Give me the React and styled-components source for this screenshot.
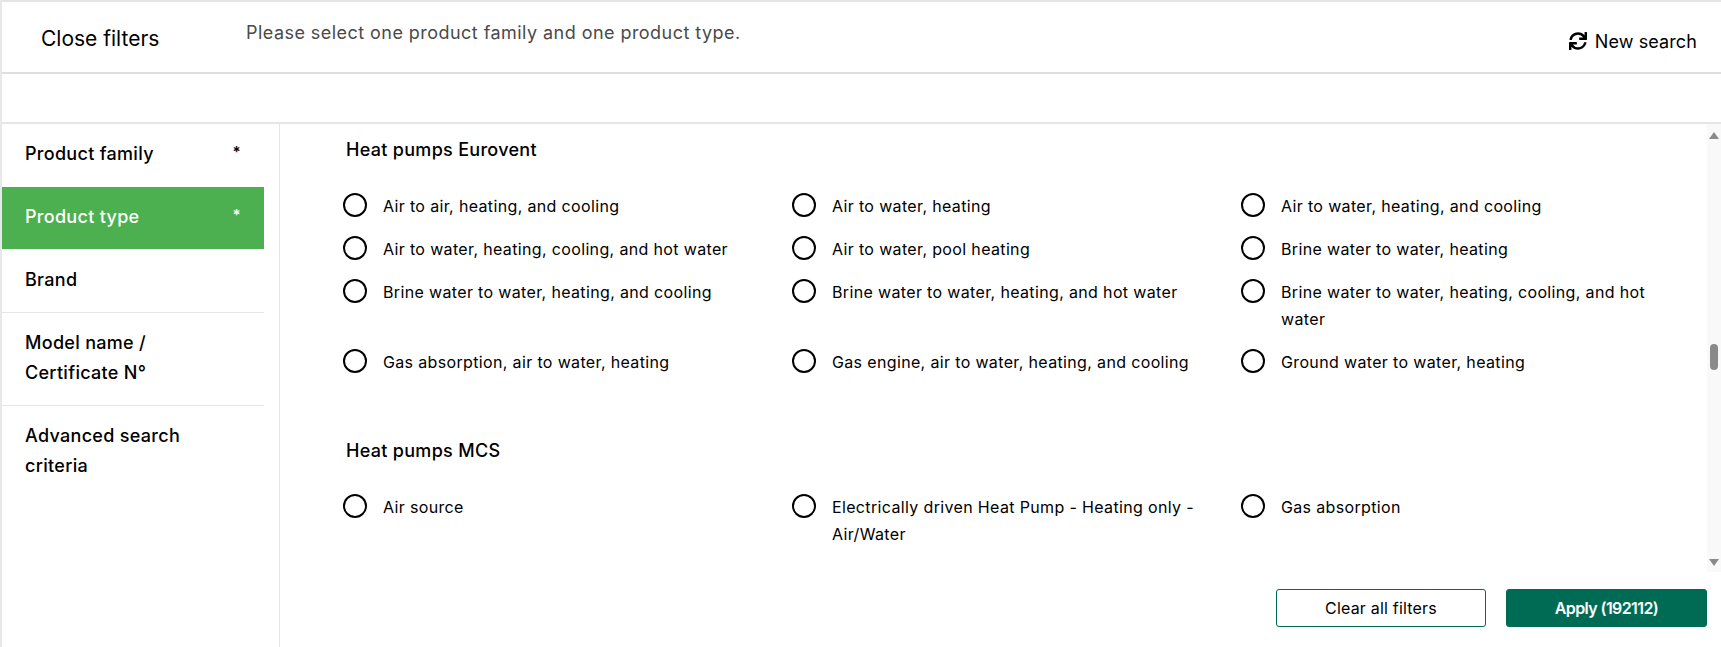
import styled, { createGlobalStyle } from "styled-components";
import { FaSync } from "react-icons/fa";

const GlobalStyle = createGlobalStyle`
  body {
    margin: 0;
    background: #fff;
    color: #000;
    font-family: "Inter", "Open Sans", sans-serif;
    overflow: hidden;
  }
`;

const Page = styled.div`
  width: 1721px;
  height: 647px;
  display: flex;
  flex-direction: column;
  border-left: 2px solid #e8e8ea;
  box-sizing: border-box;
`;

const Header = styled.header`
  height: 74px;
  flex: none;
  box-sizing: border-box;
  display: flex;
  align-items: center;
  border-top: 2px solid #e4e4e6;
  border-bottom: 2px solid #dedee0;
`;

const CloseButton = styled.div`
  width: 244px;
  padding: 2px 0 0 39px;
  box-sizing: border-box;
  font-size: 21px;
`;

const Message = styled.div`
  align-self: flex-start;
  margin-top: 18px;
  font-size: 18px;
  letter-spacing: 0.45px;
  line-height: 26px;
  color: #4a4a4a;
  flex: 1;
`;

const NewSearch = styled.div`
  display: flex;
  align-items: center;
  gap: 8px;
  margin: 8px 24px 0 0;
  font-size: 18px;
  letter-spacing: 0.1px;

  svg {
    width: 18px;
    height: 18px;
  }
`;

const Spacer = styled.div`
  height: 48px;
  flex: none;
  border-bottom: 2px solid #e6e6e8;
`;

const Main = styled.div`
  flex: 1;
  display: flex;
  min-height: 0;
`;

const Sidebar = styled.nav`
  width: 278px;
  flex: none;
  box-sizing: border-box;
  padding-right: 15px;
  border-right: 1px solid #e4e4e6;
`;

const SideItem = styled.div`
  display: flex;
  justify-content: space-between;
  padding: 15px 23px 17px 23px;
  font-size: 18px;
  font-weight: 500;
  letter-spacing: 0.3px;
  line-height: 30px;
  margin-bottom: 1px;
  background: ${(p) => (p.$active ? "#4caf50" : "transparent")};
  color: ${(p) => (p.$active ? "#fff" : "#000")};
  box-shadow: ${(p) => (p.$ruled ? "0 1px 0 #e6e6e8" : "none")};
`;

const Star = styled.span`
  font-size: 15px;
  font-weight: 600;
  line-height: 26px;
`;

const Content = styled.div`
  flex: 1;
  min-width: 0;
  display: flex;
  flex-direction: column;
`;

const Panel = styled.div`
  flex: none;
  height: 448px;
  display: flex;
`;

const Scroller = styled.div`
  flex: 1;
  padding: 12px 0 0 63px;
`;

const Group = styled.section`
  margin-bottom: 45px;
`;

const GroupTitle = styled.h3`
  margin: 0 0 30px 3px;
  font-size: 18px;
  font-weight: 500;
  letter-spacing: 0.3px;
  line-height: 27px;
`;

const Options = styled.div`
  display: grid;
  grid-template-columns: repeat(3, 449px);
`;

const Option = styled.label`
  display: flex;
  align-items: flex-start;
  gap: 16px;
  margin-bottom: 16px;
  padding-right: 30px;
  font-size: 16px;
  letter-spacing: 0.35px;
  line-height: 27px;
`;

const Radio = styled.span`
  width: 24px;
  height: 24px;
  flex: none;
  box-sizing: border-box;
  border: 2px solid #000;
  border-radius: 50%;
`;

const Scrollbar = styled.div`
  width: 14px;
  flex: none;
  display: flex;
  flex-direction: column;
  align-items: center;
  background: #f9f9f9;
  padding: 8px 0 6px;
  box-sizing: border-box;
`;

const Arrow = styled.span`
  width: 0;
  height: 0;
  border-left: 5px solid transparent;
  border-right: 5px solid transparent;
  ${(p) =>
    p.$down
      ? "border-top: 7px solid #8a8a8a; margin-top: auto;"
      : "border-bottom: 7px solid #8a8a8a;"}
`;

const Thumb = styled.span`
  width: 8px;
  height: 26px;
  margin-top: 205px;
  border-radius: 4px;
  background: #8a8a8a;
`;

const Footer = styled.footer`
  display: flex;
  justify-content: flex-end;
  gap: 20px;
  padding: 17px 14px 0 0;
`;

const ActionButton = styled.button`
  width: ${(p) => (p.$primary ? "201px" : "210px")};
  height: 38px;
  box-sizing: border-box;
  border: 1px solid #006b54;
  border-radius: 3px;
  background: ${(p) => (p.$primary ? "#006b54" : "#fff")};
  color: ${(p) => (p.$primary ? "#fff" : "#000")};
  font-family: inherit;
  font-size: 16px;
  font-weight: ${(p) => (p.$primary ? 600 : 400)};
  letter-spacing: ${(p) => (p.$primary ? "-0.6px" : "0.2px")};
  padding: 0;
`;

const sideItems = [
  { label: "Product family", star: true, ruled: false },
  { label: "Product type", star: true, active: true },
  { label: "Brand", ruled: true },
  { label: <>Model name /<br />Certificate N°</>, ruled: true },
  { label: <>Advanced search<br />criteria</> },
];

const groups = [
  {
    title: "Heat pumps Eurovent",
    options: [
      "Air to air, heating, and cooling",
      "Air to water, heating",
      "Air to water, heating, and cooling",
      "Air to water, heating, cooling, and hot water",
      "Air to water, pool heating",
      "Brine water to water, heating",
      "Brine water to water, heating, and cooling",
      "Brine water to water, heating, and hot water",
      "Brine water to water, heating, cooling, and hot water",
      "Gas absorption, air to water, heating",
      "Gas engine, air to water, heating, and cooling",
      "Ground water to water, heating",
    ],
  },
  {
    title: "Heat pumps MCS",
    options: [
      "Air source",
      "Electrically driven Heat Pump - Heating only - Air/Water",
      "Gas absorption",
    ],
  },
];

const App = () => {
  return (
    <Page>
      <GlobalStyle />
      <Header>
        <CloseButton>Close filters</CloseButton>
        <Message>Please select one product family and one product type.</Message>
        <NewSearch>
          <FaSync />
          New search
        </NewSearch>
      </Header>
      <Spacer />
      <Main>
        <Sidebar>
          {sideItems.map((item, i) => (
            <SideItem key={i} $active={item.active} $ruled={item.ruled}>
              <span>{item.label}</span>
              {item.star && <Star>*</Star>}
            </SideItem>
          ))}
        </Sidebar>
        <Content>
          <Panel>
            <Scroller>
              {groups.map((group) => (
                <Group key={group.title}>
                  <GroupTitle>{group.title}</GroupTitle>
                  <Options>
                    {group.options.map((option) => (
                      <Option key={option}>
                        <Radio />
                        <span>{option}</span>
                      </Option>
                    ))}
                  </Options>
                </Group>
              ))}
            </Scroller>
            <Scrollbar>
              <Arrow />
              <Thumb />
              <Arrow $down />
            </Scrollbar>
          </Panel>
          <Footer>
            <ActionButton>Clear all filters</ActionButton>
            <ActionButton $primary>Apply (192112)</ActionButton>
          </Footer>
        </Content>
      </Main>
    </Page>
  );
};

export default App;
